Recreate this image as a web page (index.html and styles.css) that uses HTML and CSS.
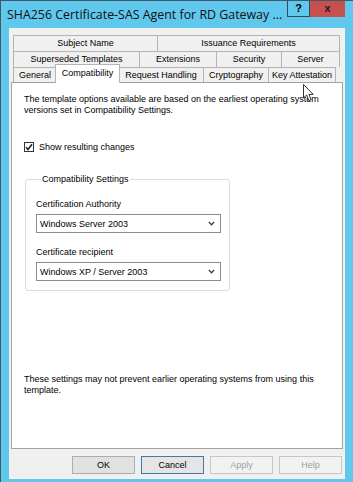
FILE: index.html
```html
<!DOCTYPE html>
<html lang="en">
<head>
  <meta charset="UTF-8">
  <title>Template Properties</title>
  <link rel="stylesheet" href="styles.css">
</head>
<body>
  <div class="window">
    <div class="titlebar">
      <div class="title">SHA256 Certificate-SAS Agent for RD Gateway ...</div>
      <div class="caption-buttons">
        <div class="cap-btn help">?</div>
        <div class="cap-btn close">x</div>
      </div>
    </div>

    <div class="client">
      <div class="tabs">
        <div class="tab-row">
          <div class="tab w144">Subject Name</div>
          <div class="tab w183 last">Issuance Requirements</div>
        </div>
        <div class="tab-row">
          <div class="tab w126">Superseded Templates</div>
          <div class="tab w77">Extensions</div>
          <div class="tab w65">Security</div>
          <div class="tab w59 last">Server</div>
        </div>
        <div class="tab-row front">
          <div class="tab w43">General</div>
          <div class="tab w63 active">Compatibility</div>
          <div class="tab w84">Request Handling</div>
          <div class="tab w65">Cryptography</div>
          <div class="tab w68 last">Key Attestation</div>
        </div>
      </div>

      <div class="panel">
        <p class="intro">The template options available are based on the earliest operating system versions set in Compatibility Settings.</p>

        <label class="check-row">
          <span class="checkbox">
            <svg width="8" height="8" viewBox="0 0 8 8"><path d="M1 4.2 L3 6.4 L7 1.2" fill="none" stroke="#222" stroke-width="1.6"/></svg>
          </span>
          Show resulting changes
        </label>

        <fieldset class="group">
          <legend>Compatibility Settings</legend>
          <div class="field-label">Certification Authority</div>
          <div class="select">
            <span>Windows Server 2003</span>
            <svg width="7" height="5" viewBox="0 0 7 5"><path d="M0.8 1 L3.5 3.8 L6.2 1" fill="none" stroke="#444" stroke-width="1.3"/></svg>
          </div>
          <div class="field-label second">Certificate recipient</div>
          <div class="select">
            <span>Windows XP / Server 2003</span>
            <svg width="7" height="5" viewBox="0 0 7 5"><path d="M0.8 1 L3.5 3.8 L6.2 1" fill="none" stroke="#444" stroke-width="1.3"/></svg>
          </div>
        </fieldset>

        <p class="note">These settings may not prevent earlier operating systems from using this template.</p>
      </div>

      <div class="buttons">
        <div class="btn">OK</div>
        <div class="btn default">Cancel</div>
        <div class="btn disabled">Apply</div>
        <div class="btn disabled">Help</div>
      </div>
    </div>

    <svg class="cursor" width="12" height="18" viewBox="0 0 12 18">
      <path d="M0.5 0.5 L0.5 14 L3.6 11 L6 16.8 L8.2 15.8 L5.9 10.4 L10.2 10.4 Z" fill="#fff" stroke="#333" stroke-width="1"/>
    </svg>
  </div>
</body>
</html>
```

FILE: styles.css
```css
body {
  margin: 0;
  padding: 0;
  background-color: #60c8ec;
  font-family: "Liberation Sans", Arial, sans-serif;
  font-size: 9px;
  color: #000;
}

.window {
  position: relative;
  width: 353px;
  height: 482px;
  background-color: #60c8ec; /* window frame */
  border-top: 1px solid #3f5a66;
  border-left: 1px solid #3f5a66;
  box-sizing: border-box;
  overflow: hidden;
}

.titlebar {
  display: flex;
  height: 27px;
}

.title {
  font-family: "Open Sans", sans-serif;
  font-size: 12.4px;
  color: #111;
  padding-left: 6px;
  line-height: 28px;
  white-space: nowrap;
}

.caption-buttons {
  display: flex;
  margin-left: auto;
  margin-right: 8px;
  margin-top: -1px;
}

.cap-btn {
  height: 17px;
  font-weight: bold;
  font-size: 11px;
  text-align: center;
  line-height: 16px;
  box-sizing: border-box;
}

.cap-btn.help {
  width: 23px;
  background-color: #60c8ec;
  border: 1px solid #2d4d5a;
  border-top: none;
}

.cap-btn.close {
  width: 35px;
  background-color: #c7504e;
  color: #1a1a1a;
}

.client {
  margin: 0 8px 0 8px;
  height: 451px;
  background-color: #f0f0f0;
  padding-top: 7px;
  box-sizing: border-box;
}

/* tabs */
.tabs {
  margin-left: 4px;
}

.tab-row {
  display: flex;
  height: 16px;
}

.tab-row.front {
  height: 15px;
}

.tab {
  box-sizing: border-box;
  height: 16px;
  border-top: 1px solid #b4b4b4;
  border-left: 1px solid #b4b4b4;
  background-color: #f0f0f0;
  text-align: center;
  line-height: 15px;
  white-space: nowrap;
}

.tab.last {
  border-right: 1px solid #b4b4b4;
}

.tab.active {
  position: relative;
  z-index: 2;
  height: 19px;
  margin: -3px -1px 0 -1px;
  width: 65px;
  background-color: #fff;
  border-right: 1px solid #b4b4b4;
  line-height: 16px;
}

.tab.active + .tab {
  border-left: none;
}

.w43 { width: 43px; }
.w59 { width: 59px; }
.w63 { width: 63px; }
.w65 { width: 65px; }
.w68 { width: 68px; }
.w77 { width: 77px; }
.w84 { width: 84px; }
.w126 { width: 126px; }
.w144 { width: 144px; }
.w183 { width: 183px; }

/* page */
.panel {
  position: relative;
  margin-left: 2px;
  width: 332px;
  height: 367px;
  box-sizing: border-box;
  background-color: #fff;
  border: 1px solid #a3a3a3;
  padding: 11px 20px 0 12px;
}

.intro, .note {
  margin: 0;
  line-height: 11px;
}

.check-row {
  display: flex;
  align-items: center;
  margin-top: 25px;
  height: 11px;
}

.checkbox {
  display: flex;
  align-items: center;
  justify-content: center;
  width: 10px;
  height: 10px;
  box-sizing: border-box;
  border: 1px solid #333;
  background-color: #fff;
  margin-right: 5px;
}

.group {
  margin: 22px 0 0 1px;
  width: 205px;
  box-sizing: border-box;
  border: 1px solid #dcdcdc;
  border-radius: 3px;
  padding: 7px 8px 9px 10px;
}

.group legend {
  padding: 0 1px;
  margin-left: 5px;
  line-height: 11px;
}

.field-label {
  line-height: 11px;
  margin-top: 7px;
}

.field-label.second {
  margin-top: 14px;
}

.select {
  display: flex;
  align-items: center;
  justify-content: space-between;
  height: 19px;
  width: 185px;
  box-sizing: border-box;
  margin-top: 4px;
  border: 1px solid #8c8c8c;
  background-color: #fff;
  padding: 0 5px 0 3px;
}

.note {
  margin-top: 83px;
}

/* dialog buttons */
.buttons {
  display: flex;
  justify-content: flex-end;
  gap: 6px;
  margin-top: 7px;
  padding-right: 3px;
}

.btn {
  width: 63px;
  height: 18px;
  box-sizing: border-box;
  border: 1px solid #adadad;
  background-color: #e1e1e1;
  text-align: center;
  line-height: 16px;
}

.btn.default {
  border-color: #3d7bad;
  background-color: #e5e5e5;
}

.btn.disabled {
  border-color: #c6c6c6;
  background-color: #f2f2f2;
  color: #a0a0a0;
}

.cursor {
  position: absolute;
  left: 302px;
  top: 83px;
}
```
